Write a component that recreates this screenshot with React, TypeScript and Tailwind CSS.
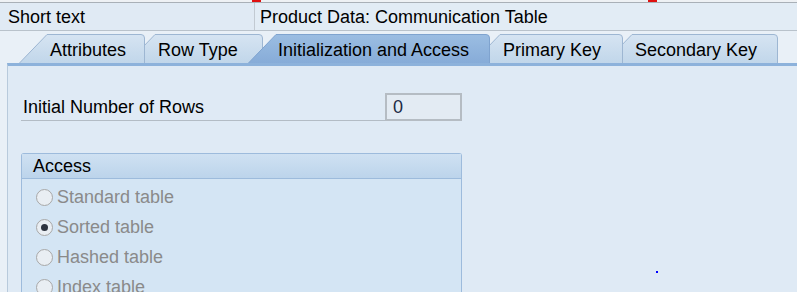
import React from "react";

type Tab = { label: string; width: number; overlap: number; z: string; active?: boolean };

const tabs: Tab[] = [
  { label: "Attributes", width: 126, overlap: 0, z: "z-[5]" },
  { label: "Row Type", width: 136, overlap: 18, z: "z-[4]" },
  { label: "Initialization and Access", width: 242, overlap: 15, z: "z-[10]", active: true },
  { label: "Primary Key", width: 151, overlap: 18, z: "z-[2]" },
  { label: "Secondary Key", width: 174, overlap: 19, z: "z-[1]" },
];

function TabShape({ width, active }: { width: number; active?: boolean }) {
  const h = 29;
  const s = 28;
  const d = `M0.5 ${h} L${s} 0.5 L${width - 4} 0.5 Q${width - 0.5} 0.5 ${width - 0.5} 4 L${width - 0.5} ${h}`;
  const id = active ? "tabActive" : "tabIdle";
  return (
    <svg width={width} height={h} className="absolute inset-0" viewBox={`0 0 ${width} ${h}`}>
      <defs>
        <linearGradient id={id} x1="0" y1="0" x2="0" y2="1">
          <stop offset="0" stopColor={active ? "#9bbde2" : "#d6e4f2"} />
          <stop offset="1" stopColor={active ? "#87acd8" : "#c1d6ea"} />
        </linearGradient>
      </defs>
      <path d={d + " Z"} fill={`url(#${id})`} />
      <path d={d} fill="none" stroke={active ? "#7fa3cf" : "#9db6d2"} strokeWidth="1" />
    </svg>
  );
}

function Radio({ label, checked }: { label: string; checked?: boolean }) {
  return (
    <div className="flex h-[30px] items-center gap-[4px]">
      <span className="flex h-[17px] w-[17px] items-center justify-center rounded-full border-[1.5px] border-[#a8a8a8] bg-[#e9eef3]">
        {checked && <span className="h-[7px] w-[7px] rounded-full bg-[#2e3440]" />}
      </span>
      <span className="text-[#8a8a8a]">{label}</span>
    </div>
  );
}

export default function App() {
  return (
    <div className="relative flex h-[292px] w-[797px] flex-col overflow-hidden bg-[#e9f0f7] font-['Liberation_Sans',Arial,sans-serif] text-[18px] leading-[22px] text-black">
      {/* top strip with focused field corners */}
      <div className="flex h-[3px] shrink-0 border-b border-[#a9b0b7] bg-[#eef1f4]">
        <div className="ml-[252px] h-[2px] w-[9px] border-b-2 border-l-2 border-[#e01010]" />
        <div className="ml-[387px] h-[2px] w-[9px] border-b-2 border-r-2 border-[#e01010]" />
      </div>

      {/* Short text row */}
      <div className="flex h-[28px] shrink-0 border-b border-[#b9c2cb] bg-[#e0eaf4]">
        <div className="flex w-[254px] items-center pl-[8px] pt-[1px]">Short text</div>
        <div className="flex flex-1 items-center border-l border-[#c2cad2] bg-[#e2ecf5] pl-[5px] pt-[1px]">
          Product Data: Communication Table
        </div>
      </div>

      {/* tab strip */}
      <div className="flex h-[32px] shrink-0 items-end pl-[19px]">
        {tabs.map((t) => (
          <div
            key={t.label}
            className={`relative flex h-[29px] shrink-0 items-center pt-[3px] ${t.z}`}
            style={{ width: t.width, marginLeft: -t.overlap }}
          >
            <TabShape width={t.width} active={t.active} />
            <span className={`relative whitespace-nowrap ${t.active ? "pl-[30px]" : "pl-[31px]"}`}>{t.label}</span>
          </div>
        ))}
      </div>

      {/* panel */}
      <div className="ml-[7px] flex flex-1 flex-col border-l border-t-[3px] border-l-[#b8cadc] border-t-[#8db2db] bg-[#dfeaf5] pl-[13px] pt-[27px]">
        <div className="flex h-[28px] w-[441px]">
          <div className="flex flex-1 items-center border-b border-[#b3bcc5] pl-[2px] pt-[1px]">Initial Number of Rows</div>
          <div className="flex w-[77px] items-center border-2 border-[#b5bcc3] bg-[#e3ebf3] pl-[6px] text-[#1c2a44]">0</div>
        </div>

        <div className="mt-[32px] flex w-[441px] flex-1 flex-col rounded-t-[3px] border border-b-0 border-[#9dbbdc]">
          <div className="flex h-[25px] items-center border-b border-[#9dbbdc] bg-gradient-to-b from-[#cfe1f2] to-[#bcd4eb] pl-[11px]">
            Access
          </div>
          <div className="flex flex-1 flex-col bg-[#d4e5f4] pl-[14px] pt-[3px]">
            <Radio label="Standard table" />
            <Radio label="Sorted table" checked />
            <Radio label="Hashed table" />
            <Radio label="Index table" />
          </div>
        </div>
      </div>

      <div className="absolute left-[656px] top-[271px] h-[2px] w-[2px] bg-[#0000ff]" />
    </div>
  );
}
